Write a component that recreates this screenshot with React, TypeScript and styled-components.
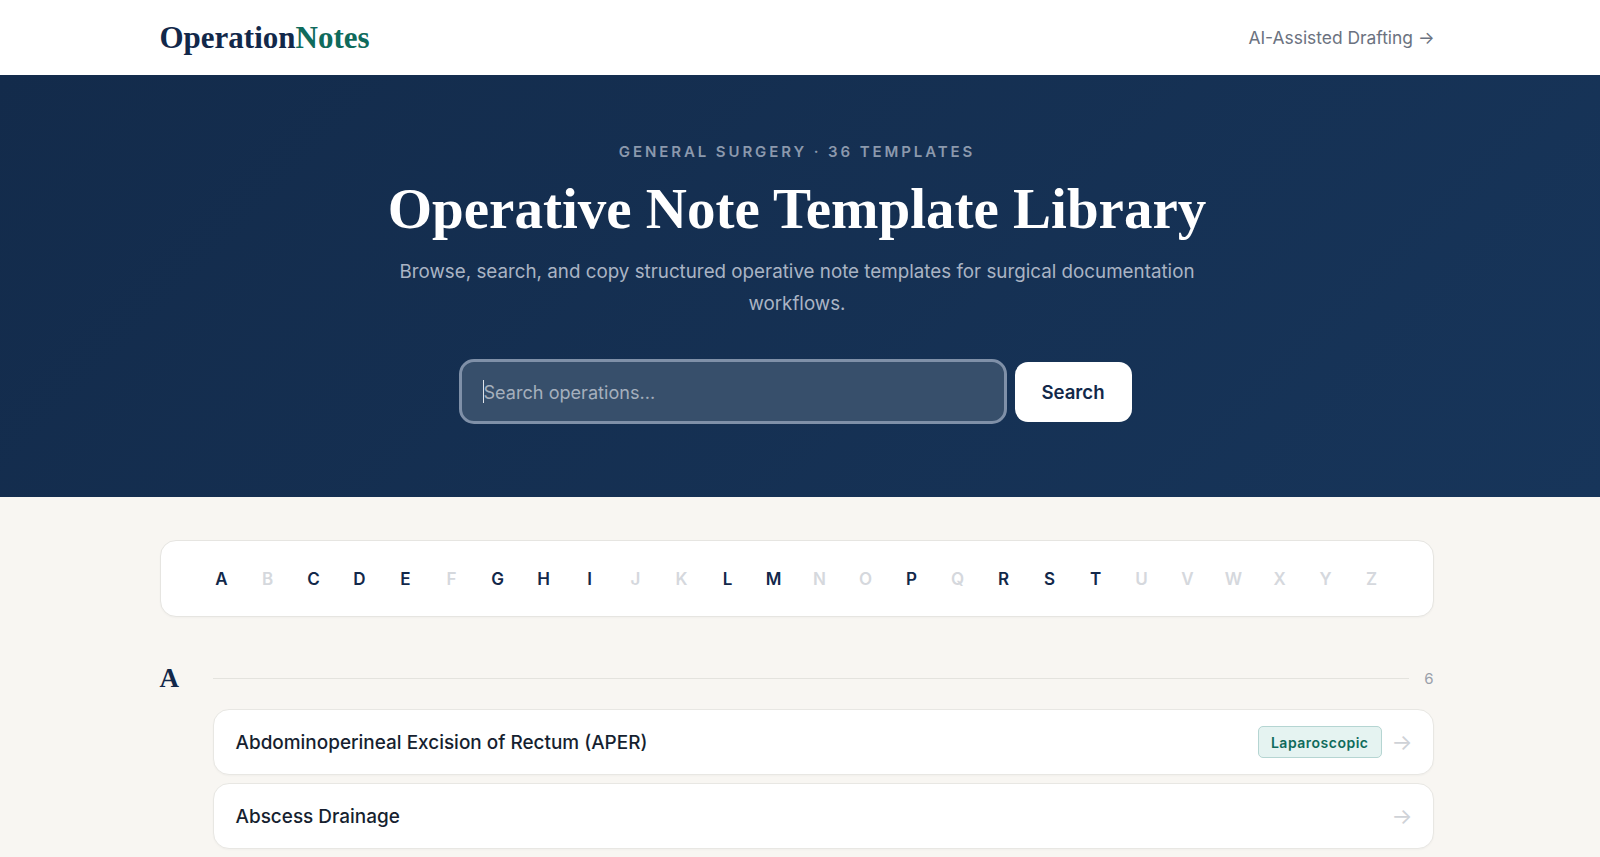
import styled, { createGlobalStyle } from 'styled-components';

const GlobalStyle = createGlobalStyle`
  html, body {
    margin: 0;
    padding: 0;
    height: 857px;
    overflow: hidden;
    background: #f8f6f2;
    font-family: 'Inter', 'Liberation Sans', sans-serif;
  }
  * {
    box-sizing: border-box;
  }
`;

const letters = 'ABCDEFGHIJKLMNOPQRSTUVWXYZ'.split('');
const activeLetters = 'ACDEGHILMPRST';

const operations = [
  { name: 'Abdominoperineal Excision of Rectum (APER)', tag: 'Laparoscopic' },
  { name: 'Abscess Drainage' },
];

const App = () => {
  return (
    <>
      <GlobalStyle />
      <Header>
        <HeaderInner>
          <Logo>
            Operation<LogoAccent>Notes</LogoAccent>
          </Logo>
          <NavLink href="#">AI-Assisted Drafting →</NavLink>
        </HeaderInner>
      </Header>

      <Hero>
        <Eyebrow>General Surgery · 36 Templates</Eyebrow>
        <Title>Operative Note Template Library</Title>
        <SubTitle>
          Browse, search, and copy structured operative note templates for surgical documentation
          workflows.
        </SubTitle>
        <SearchForm onSubmit={(e) => e.preventDefault()}>
          <SearchField>
            <SearchInput placeholder="Search operations..." />
          </SearchField>
          <SearchButton type="submit">Search</SearchButton>
        </SearchForm>
      </Hero>

      <Main>
        <MainInner>
          <AlphabetCard>
            {letters.map((letter) => (
              <Letter key={letter} $active={activeLetters.includes(letter)}>
                {letter}
              </Letter>
            ))}
          </AlphabetCard>

          <SectionHeader>
            <SectionLetter>A</SectionLetter>
            <Divider />
            <SectionCount>6</SectionCount>
          </SectionHeader>

          <OperationList>
            {operations.map((op) => (
              <OperationRow key={op.name} href="#">
                <OperationName>{op.name}</OperationName>
                {op.tag && <Tag>{op.tag}</Tag>}
                <RowArrow>→</RowArrow>
              </OperationRow>
            ))}
          </OperationList>
        </MainInner>
      </Main>
    </>
  );
};

const Header = styled.header`
  height: 75px;
  padding-right: 6px;
  background: #fff;
`;

const HeaderInner = styled.div`
  max-width: 1275px;
  height: 100%;
  margin: 0 auto;
  display: flex;
  align-items: center;
  justify-content: space-between;
`;

const Logo = styled.div`
  font-family: 'Liberation Serif', serif;
  font-size: 31px;
  font-weight: 700;
  color: #12284a;
`;

const LogoAccent = styled.span`
  color: #0f6b5c;
`;

const NavLink = styled.a`
  font-size: 17.4px;
  color: #6b7280;
  text-decoration: none;
`;

const Hero = styled.section`
  height: 422px;
  padding: 67px 6px 0 0;
  display: flex;
  flex-direction: column;
  align-items: center;
  background: linear-gradient(135deg, #132b4b 0%, #17355a 100%);
`;

const Eyebrow = styled.p`
  margin: 0;
  font-size: 15px;
  line-height: 20px;
  font-weight: 600;
  letter-spacing: 2.9px;
  text-transform: uppercase;
  color: #8c99ad;
`;

const Title = styled.h1`
  margin: 13px 0 0;
  font-family: 'Liberation Serif', serif;
  font-size: 57px;
  line-height: 68px;
  font-weight: 700;
  color: #fff;
`;

const SubTitle = styled.p`
  width: 820px;
  margin: 13px 0 0;
  font-size: 18.8px;
  line-height: 31.6px;
  text-align: center;
  color: #aab4c4;
`;

const SearchForm = styled.form`
  display: flex;
  align-items: center;
  gap: 8px;
  margin: 40px 4px 0 0;
`;

const SearchField = styled.div`
  position: relative;
  width: 548px;
  height: 65px;

  &::before {
    content: '';
    position: absolute;
    left: 24px;
    top: 21px;
    width: 1px;
    height: 23px;
    background: #dfe4ea;
  }
`;

const SearchInput = styled.input`
  width: 100%;
  height: 100%;
  padding: 0 22px;
  border: 3px solid #7f90a8;
  border-radius: 15px;
  outline: none;
  background: #374f6b;
  font-family: inherit;
  font-size: 18.1px;
  color: #fff;

  &::placeholder {
    color: #a5afbd;
    opacity: 1;
  }
`;

const SearchButton = styled.button`
  width: 117px;
  height: 60px;
  border: none;
  border-radius: 13px;
  background: #fff;
  font-family: inherit;
  font-size: 18.6px;
  font-weight: 600;
  color: #12284a;
  cursor: pointer;
`;

const Main = styled.main`
  padding: 43px 7px 0 0;
`;

const MainInner = styled.div`
  max-width: 1274px;
  margin: 0 auto;
`;

const AlphabetCard = styled.nav`
  height: 77px;
  display: flex;
  align-items: center;
  justify-content: center;
  border: 1px solid #e6e5e1;
  border-radius: 16px;
  background: #fff;
  box-shadow: 0 1px 2px rgba(0, 0, 0, 0.03);
`;

const Letter = styled.a<{ $active: boolean }>`
  width: 46px;
  text-align: center;
  font-size: 17px;
  font-weight: 600;
  color: ${(p) => (p.$active ? '#12284a' : '#d5d8dd')};
`;

const SectionHeader = styled.div`
  display: flex;
  align-items: center;
  margin-top: 45px;
  height: 32px;
`;

const SectionLetter = styled.span`
  width: 53px;
  font-family: 'Liberation Serif', serif;
  font-size: 27px;
  font-weight: 700;
  color: #12284a;
`;

const Divider = styled.div`
  flex: 1;
  height: 1px;
  background: #e4e3de;
`;

const SectionCount = styled.span`
  margin-left: 15px;
  font-size: 15px;
  color: #9aa0aa;
`;

const OperationList = styled.div`
  display: flex;
  flex-direction: column;
  gap: 8px;
  margin: 15px 0 0 53px;
`;

const OperationRow = styled.a`
  height: 66px;
  display: flex;
  align-items: center;
  padding: 0 20px 0 22px;
  border: 1px solid #e8e7e3;
  border-radius: 16px;
  background: #fff;
  box-shadow: 0 1px 2px rgba(0, 0, 0, 0.03);
  text-decoration: none;
`;

const OperationName = styled.span`
  flex: 1;
  font-size: 18.95px;
  font-weight: 500;
  color: #161f30;
`;

const Tag = styled.span`
  height: 32px;
  display: flex;
  align-items: center;
  padding: 0 12px;
  border: 1px solid #b5d5d2;
  border-radius: 5px;
  background: #e5f3f1;
  font-size: 14px;
  font-weight: 600;
  letter-spacing: 0.5px;
  color: #0f6b5c;
`;

const RowArrow = styled.span`
  margin-left: 10px;
  font-size: 22px;
  color: #cfd2d7;
`;

export default App;
